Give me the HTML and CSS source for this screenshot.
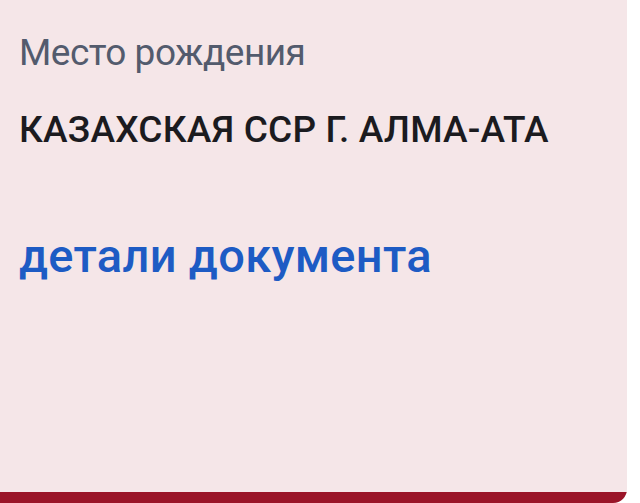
FILE: index.html
```html
<!DOCTYPE html>
<html lang="ru">
<head>
<meta charset="utf-8">
<link rel="stylesheet" href="styles.css">
</head>
<body>
<div class="card">
  <div class="content">
    <div class="label">Место рождения</div>
    <div class="value">КАЗАХСКАЯ ССР Г. АЛМА-АТА</div>
    <div class="link">детали документа</div>
  </div>
  <div class="bar"></div>
</div>
</body>
</html>
```
FILE: styles.css
```css
html, body {
  margin: 0;
  padding: 0;
  background: #ffffff;
}
body {
  width: 640px;
  height: 503px;
  overflow: hidden;
  font-family: Roboto, "Noto Sans", sans-serif;
}
.card {
  width: 627px;
  height: 503px;
  background: #f5e6e8;
  display: flex;
  flex-direction: column;
  border-bottom-right-radius: 14px;
  overflow: hidden;
}
.content {
  flex: 1;
  padding: 29px 0 0 19px;
  display: flex;
  flex-direction: column;
}
.label {
  font-size: 37px;
  line-height: 48px;
  letter-spacing: -0.5px;
  color: #535b6d;
}
.value {
  margin-top: 29px;
  font-size: 37px;
  line-height: 48px;
  font-weight: 500;
  letter-spacing: 0.2px;
  color: #1b1b1f;
}
.link {
  margin-top: 74px;
  font-size: 47px;
  line-height: 56px;
  font-weight: 500;
  letter-spacing: 0.3px;
  color: #1d5bc4;
}
.bar {
  height: 11px;
  background: #9a1428;
}
```
